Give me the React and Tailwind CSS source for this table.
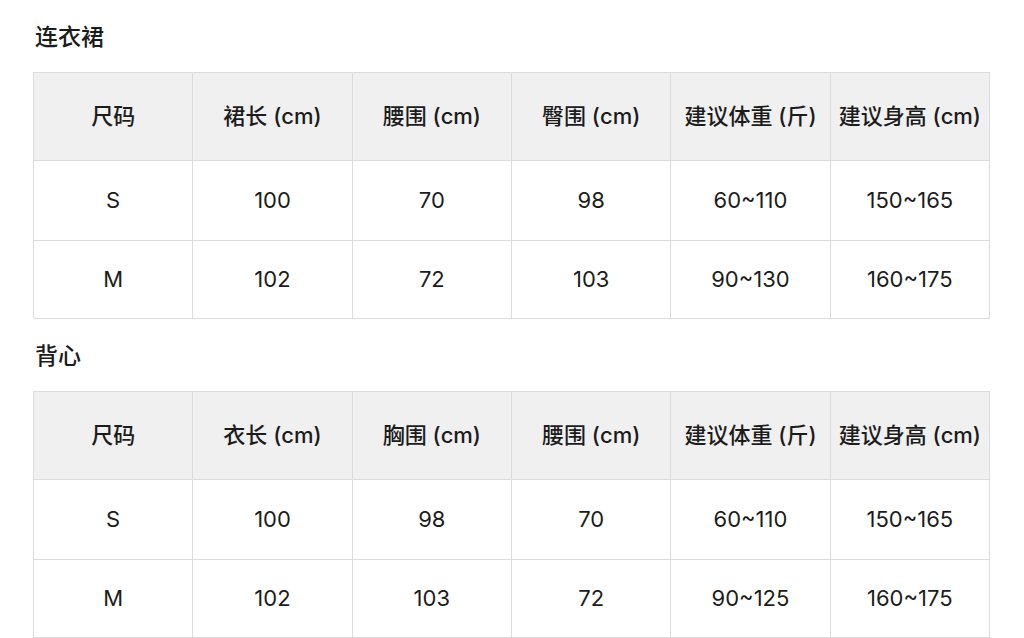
import React from "react";

const dress = {
  title: "连衣裙",
  head: ["尺码", "裙长 (cm)", "腰围 (cm)", "臀围 (cm)", "建议体重 (斤)", "建议身高 (cm)"],
  rows: [
    ["S", "100", "70", "98", "60~110", "150~165"],
    ["M", "102", "72", "103", "90~130", "160~175"],
  ],
};

const vest = {
  title: "背心",
  head: ["尺码", "衣长 (cm)", "胸围 (cm)", "腰围 (cm)", "建议体重 (斤)", "建议身高 (cm)"],
  rows: [
    ["S", "100", "98", "70", "60~110", "150~165"],
    ["M", "102", "103", "72", "90~125", "160~175"],
  ],
};

const SizeTable = ({ data }) => {
  return (
    <section>
      <h2 className="text-[23px] leading-[28px] font-medium text-[#1c1c1c] pl-[2px] mb-[21px]">{data.title}</h2>
      <table className="w-[957px] table-fixed border-collapse text-[#1c1c1c]">
        <thead>
          <tr className="h-[88px] bg-[#f0f0f0]">
            {data.head.map((h) => (
              <th key={h} className="border border-[#dcdcdc] font-medium text-[22px] text-center align-middle p-0 whitespace-nowrap">
                {h}
              </th>
            ))}
          </tr>
        </thead>
        <tbody>
          {data.rows.map((r, i) => (
            <tr key={i} className={i === 0 ? "h-[80px]" : "h-[78px]"}>
              {r.map((c, j) => (
                <td key={j} className="border border-[#dcdcdc] text-[22px] text-center align-middle p-0">
                  {c}
                </td>
              ))}
            </tr>
          ))}
        </tbody>
      </table>
    </section>
  );
};

export default function App() {
  return (
    <div
      className="w-[1024px] h-[638px] overflow-hidden bg-white pl-[33px] pt-[23px] flex flex-col gap-[23px]"
      style={{ fontFamily: '"Inter", "Noto Sans CJK SC", sans-serif' }}
    >
      <SizeTable data={dress} />
      <SizeTable data={vest} />
    </div>
  );
}
